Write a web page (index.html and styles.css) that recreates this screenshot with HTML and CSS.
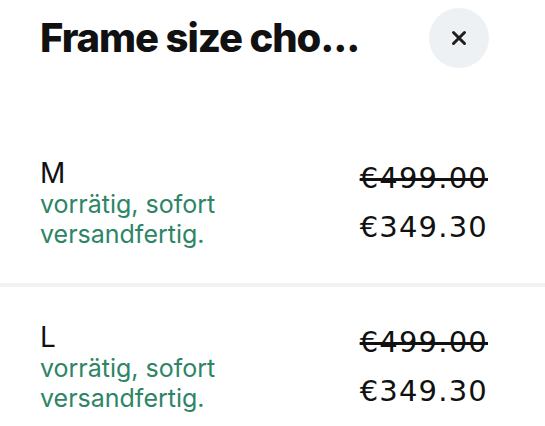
FILE: index.html
```html
<!DOCTYPE html>
<html lang="de">
<head>
<meta charset="utf-8">
<title>Frame size</title>
<link rel="stylesheet" href="styles.css">
</head>
<body>
<div class="sheet">
  <header class="header">
    <h1 class="title">Frame size cho...</h1>
    <button class="close" aria-label="Close">
      <svg width="16" height="16" viewBox="0 0 16 16"><path d="M2.5 2.5 L13.5 13.5 M13.5 2.5 L2.5 13.5" stroke="#1f1f1f" stroke-width="3" stroke-linecap="round"/></svg>
    </button>
  </header>
  <div class="row">
    <div class="info">
      <div class="size">M</div>
      <div class="stock">vorrätig, sofort<br>versandfertig.</div>
    </div>
    <div class="prices">
      <div class="old">€499.00</div>
      <div class="new">€349.30</div>
    </div>
  </div>
  <div class="divider"></div>
  <div class="row">
    <div class="info">
      <div class="size">L</div>
      <div class="stock">vorrätig, sofort<br>versandfertig.</div>
    </div>
    <div class="prices">
      <div class="old">€499.00</div>
      <div class="new">€349.30</div>
    </div>
  </div>
</div>
</body>
</html>
```
FILE: styles.css
```css
* { box-sizing: border-box; }
html, body { margin: 0; padding: 0; background: #fff; overflow: hidden; }
body { font-family: "Inter", "Noto Sans", sans-serif; color: #111; }
.sheet { width: 545px; }
.header {
  display: flex;
  justify-content: space-between;
  align-items: center;
  padding: 8px 56px 55px 40px;
  height: 123px;
}
.title {
  margin: 0;
  font-size: 40px;
  font-weight: 800;
  letter-spacing: -1.1px;
  line-height: 60px;
}
.close {
  width: 60px;
  height: 60px;
  flex: none;
  border-radius: 50%;
  border: none;
  background: #eef1f4;
  display: flex;
  align-items: center;
  justify-content: center;
  padding: 0;
}
.row {
  display: flex;
  justify-content: space-between;
  align-items: center;
  height: 160px;
  padding: 0 57px 0 40px;
}
.size {
  font-size: 28px;
  line-height: 32px;
  color: #111;
}
.stock {
  font-size: 25px;
  line-height: 30px;
  color: #2d8566;
}
.prices {
  text-align: right;
  font-family: "DejaVu Sans", "Liberation Sans", sans-serif;
  font-size: 29px;
  letter-spacing: 1.2px;
  color: #111;
}
.old { text-decoration: line-through; text-decoration-thickness: 2.5px; line-height: 48px; }
.new { line-height: 50px; }
.divider { height: 4px; background: #f2f2f2; }
```
